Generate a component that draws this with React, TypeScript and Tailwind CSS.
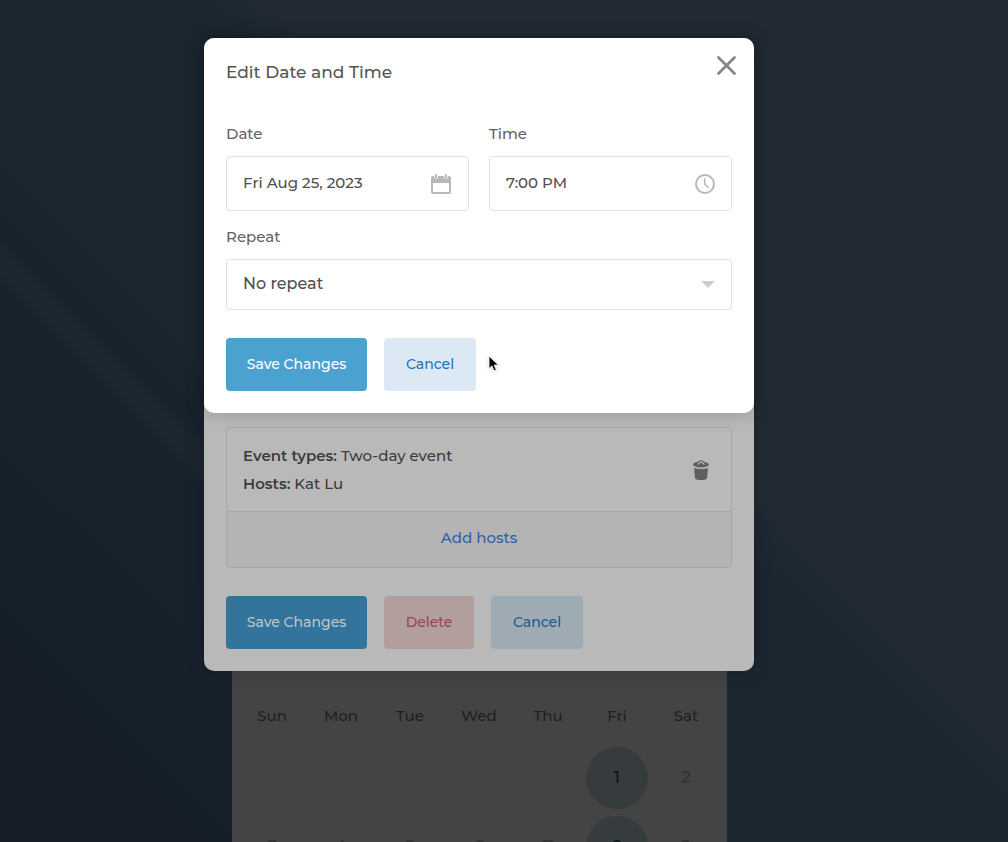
import { useState } from "react";
import type { ReactNode } from "react";

const weekDays = ["Sun", "Mon", "Tue", "Wed", "Thu", "Fri", "Sat"];

// leading nulls are the blank cells before the 1st
const days: (number | null)[] = [null, null, null, null, null, 1, 2, 3, 4, 5, 6, 7, 8, 9];
const availableDays = [1, 8];

function CloseIcon() {
  return (
    <svg width="24" height="24" viewBox="0 0 24 24" fill="none" stroke="#868686" strokeWidth="2.8" strokeLinecap="round">
      <path d="M4.500 3.500 20.500 19.500M20.500 3.500 4.500 19.500" />
    </svg>
  );
}

function CalendarIcon() {
  return (
    <svg width="20" height="20" viewBox="0 0 20 20">
      <path fill="#b8b8b8" fillRule="evenodd" d="M2 2h16a2 2 0 0 1 2 2v14a2 2 0 0 1-2 2H2a2 2 0 0 1-2-2V4a2 2 0 0 1 2-2ZM2 9v8.2a.8.8 0 0 0 .8.8h14.4a.8.8 0 0 0 .8-.8V9Z" />
      <path stroke="#fff" strokeWidth="3.600" strokeLinecap="round" d="M5 0v3.200M15 0v3.200" />
      <path stroke="#b8b8b8" strokeWidth="2" strokeLinecap="round" d="M5 1v2.500M15 1v2.500" />
    </svg>
  );
}

function ClockIcon() {
  return (
    <svg width="20" height="20" viewBox="0 0 20 20" fill="none" stroke="#b8b8b8" strokeLinecap="round" strokeLinejoin="round">
      <circle cx="10" cy="10" r="9" strokeWidth="2" />
      <path strokeWidth="1.5" d="M9.700 4.700V10l3.500 3.500" />
    </svg>
  );
}

function TrashIcon() {
  return (
    <svg width="16" height="20" viewBox="0 0 16 20">
      <path fill="none" stroke="#5f5f5f" strokeWidth="1" d="M4.500 2.500Q8-1 11.500 2.500" />
      <ellipse cx="8" cy="4.500" rx="8" ry="3" fill="#5f5f5f" />
      <path fill="none" stroke="#b9b9b9" strokeWidth="1.200" strokeLinecap="round" d="M5 4.200Q8 .3 11 4.200" />
      <path fill="#5f5f5f" d="M1 8Q8 10 15 8L14 18Q13.800 20 8 20T2 18Z" />
    </svg>
  );
}

function Cursor() {
  return (
    <svg className="absolute left-[284px] top-[317px] drop-shadow-sm" width="12" height="18" viewBox="0 0 12 18">
      <path fill="#000" stroke="#fff" strokeWidth=".8" d="M1 1v12.600l2.900-2.700 2.100 4.900 2.300-1-2.100-4.700h4.200Z" />
    </svg>
  );
}

function Button({ className, children }: { className: string; children: ReactNode }) {
  return (
    <button type="button" className={`h-[53px] rounded pb-0.5 text-sm font-medium ${className}`}>
      {children}
    </button>
  );
}

function Calendar() {
  return (
    <section className="col-start-1 row-start-1 mt-[100px] w-full max-w-[495px] self-stretch bg-[#444444] px-1.5 pt-[604px]">
      <div className="grid grid-cols-7 text-center text-[15px] font-medium leading-6 text-[#1f1f1f]">
        {weekDays.map((day) => (
          <div key={day}>{day}</div>
        ))}
      </div>
      <div className="mt-[19px] grid grid-cols-7 justify-items-center gap-y-[7px]">
        {days.map((day, i) => {
          if (!day) {
            return <div key={i} />;
          }
          const available = availableDays.includes(day);
          return (
            <button
              key={i}
              type="button"
              disabled={!available}
              className={`h-[62px] w-[62px] rounded-full text-[17px] font-medium ${available ? "bg-[#363c3d] text-[#0a1218]" : "text-[#303030]"}`}
            >
              {day}
            </button>
          );
        })}
      </div>
    </section>
  );
}

function EventModal() {
  return (
    <section className="col-start-1 row-start-1 mt-[38px] w-full max-w-[550px] rounded-[10px] bg-[#b9b9b9] px-[22px] pb-[22px] pt-[389px] shadow-[0_0_20px_rgba(0,0,0,0.2)]">
      <div className="overflow-hidden rounded border border-[#a7a7a7]">
        <div className="flex h-[83px] items-center justify-between pl-4 pr-[22px] text-[15px] font-medium leading-7 text-[#3b3b3b]">
          <div>
            <div>
              <strong className="font-semibold">Event types:</strong> Two-day event
            </div>
            <div>
              <strong className="font-semibold">Hosts:</strong> Kat Lu
            </div>
          </div>
          <button type="button" aria-label="Remove">
            <TrashIcon />
          </button>
        </div>
        <button type="button" className="h-14 w-full border-t border-[#a7a7a7] bg-[#b4b4b4] pb-0.5 text-[15px] font-medium text-[#3060a8]">
          Add hosts
        </button>
      </div>
      <div className="mt-7 flex gap-[17px]">
        <Button className="w-[141px] bg-[#32749c] text-[#bdc6cc]">Save Changes</Button>
        <Button className="w-[90px] bg-[#b19e9d] text-[#984a51]">Delete</Button>
        <Button className="w-[92px] bg-[#9eabb3] text-[#175d8c]">Cancel</Button>
      </div>
    </section>
  );
}

function DateTimeModal() {
  const [date, setDate] = useState("Fri Aug 25, 2023");
  const [time, setTime] = useState("7:00 PM");
  const [repeat, setRepeat] = useState("No repeat");

  return (
    <section className="relative col-start-1 row-start-1 mt-[38px] w-full max-w-[550px] rounded-[10px] bg-white pb-[22px] pt-4 shadow-[0_0_20px_rgba(0,0,0,0.2)]">
      <div className="flex items-start justify-between pl-[22px] pr-4">
        <h2 className="text-[17px] font-medium leading-9 text-[#555555]">Edit Date and Time</h2>
        <button type="button" aria-label="Close">
          <CloseIcon />
        </button>
      </div>
      <form className="mt-8 px-[22px] text-[15px] font-medium text-[#505050]">
        <div className="grid grid-cols-2 gap-5">
          <div>
            <label htmlFor="date" className="block leading-6 text-[#646464]">Date</label>
            <div className="mt-2.5 flex h-[55px] items-center rounded border border-[#e2e2e2] pl-4 pr-[17px]">
              <input id="date" value={date} onChange={(e) => setDate(e.target.value)} className="min-w-0 flex-1 outline-none" />
              <CalendarIcon />
            </div>
          </div>
          <div>
            <label htmlFor="time" className="block leading-6 text-[#646464]">Time</label>
            <div className="mt-2.5 flex h-[55px] items-center rounded border border-[#e2e2e2] pl-4 pr-4">
              <input id="time" value={time} onChange={(e) => setTime(e.target.value)} className="min-w-0 flex-1 outline-none" />
              <ClockIcon />
            </div>
          </div>
        </div>
        <label htmlFor="repeat" className="mt-3.5 block leading-6 text-[#646464]">Repeat</label>
        <div className="mt-2.5 grid h-[51px] items-center rounded border border-[#e2e2e2]">
          <select
            id="repeat"
            value={repeat}
            onChange={(e) => setRepeat(e.target.value)}
            className="col-start-1 row-start-1 h-full appearance-none pb-0.5 pl-4 text-base font-medium outline-none"
          >
            <option>No repeat</option>
            <option>Weekly</option>
          </select>
          <svg className="pointer-events-none col-start-1 row-start-1 mr-4 justify-self-end" width="14" height="7" viewBox="0 0 14 7">
            <path fill="#cccccc" d="M0 0h14L7 7Z" />
          </svg>
        </div>
        <div className="mt-7 flex gap-[17px]">
          <Button className="w-[141px] bg-[#4ba2d1] text-white">Save Changes</Button>
          <Button className="w-[92px] bg-[#dce9f5] text-[#1b76b8]">Cancel</Button>
        </div>
      </form>
      <Cursor />
    </section>
  );
}

export default function App() {
  return (
    <main className="grid h-screen grid-cols-1 items-start justify-items-center overflow-hidden bg-[#1b2631] bg-[linear-gradient(45deg,#141d28_0%,#141d28_9%,#16202b_14%,#18222d_25%,#18222d_30%,#1c2630_31%,#1c2630_32%,#18222d_33%,#1b2631_37%,#1b2631_56%,#222b34_60%)] pr-[50px] font-[Montserrat,Inter,sans-serif]">
      <Calendar />
      <EventModal />
      <DateTimeModal />
    </main>
  );
}
